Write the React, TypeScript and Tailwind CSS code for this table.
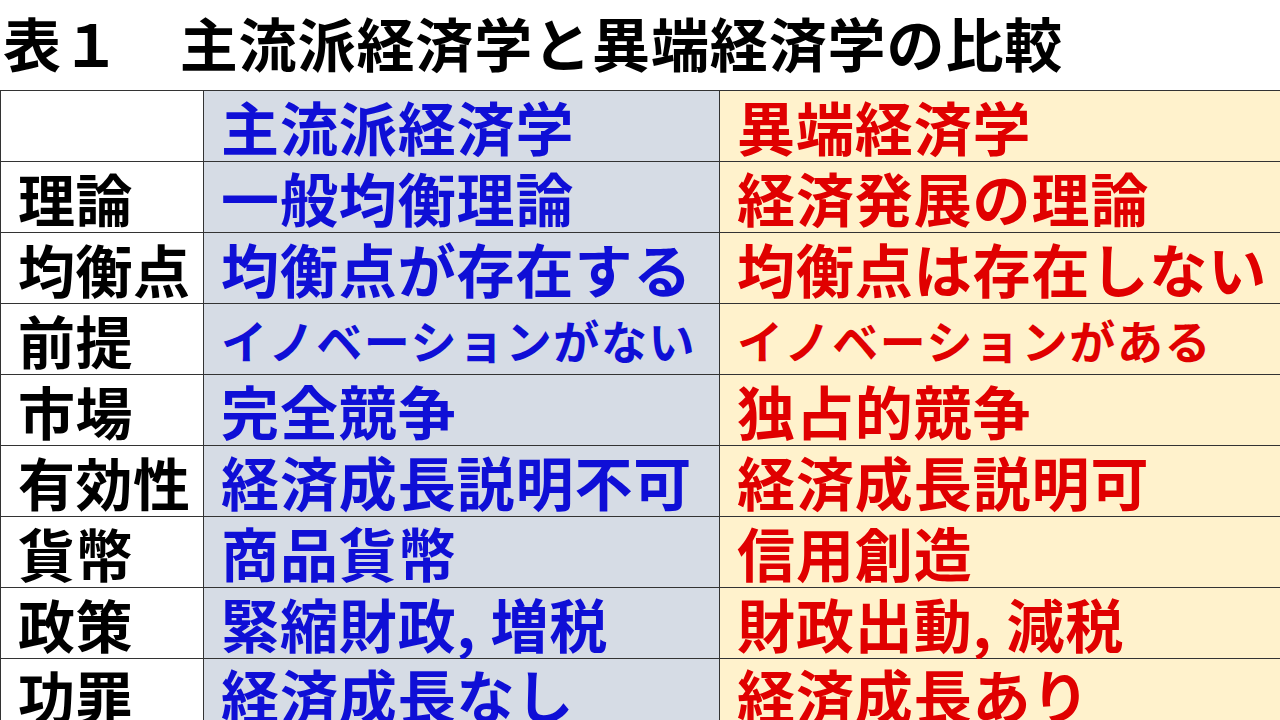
import React from "react";

const rows: { label: string; main: string; hetero: string; small?: boolean }[] = [
  { label: "", main: "主流派経済学", hetero: "異端経済学" },
  { label: "理論", main: "一般均衡理論", hetero: "経済発展の理論" },
  { label: "均衡点", main: "均衡点が存在する", hetero: "均衡点は存在しない" },
  { label: "前提", main: "イノベーションがない", hetero: "イノベーションがある", small: true },
  { label: "市場", main: "完全競争", hetero: "独占的競争" },
  { label: "有効性", main: "経済成長説明不可", hetero: "経済成長説明可" },
  { label: "貨幣", main: "商品貨幣", hetero: "信用創造" },
  { label: "政策", main: "緊縮財政, 増税", hetero: "財政出動, 減税" },
  { label: "功罪", main: "経済成長なし", hetero: "経済成長あり" },
];

export default function App() {
  return (
    <div
      className="w-[1280px] h-[720px] overflow-hidden bg-white"
      style={{ fontFamily: '"Noto Sans CJK JP", "Noto Sans", sans-serif' }}
    >
      <div className="h-[90px] flex items-center pl-[3px] pb-[6px]">
        <h1 className="text-[58px] leading-none font-bold text-black whitespace-pre tracking-[0.9px]">表１　主流派経済学と異端経済学の比較</h1>
      </div>
      <div className="grid grid-cols-[203px_516px_561px] border-t-[1.5px] border-l-[1.5px] border-[#333]">
        {rows.map((r, i) => (
          <React.Fragment key={i}>
            <div className="h-[71px] flex items-center pl-[17px] border-r-[1.5px] border-b-[1.5px] border-[#333] bg-white text-black font-bold text-[57px] leading-none whitespace-nowrap tracking-[0.5px]">
              {r.label}
            </div>
            <div
              className={
                "h-[71px] flex items-center pl-[17px] border-r-[1.5px] border-b-[1.5px] border-[#333] bg-[#d6dce5] text-[#0f0fd6] font-bold leading-none whitespace-nowrap " +
                (r.small ? "text-[46px] tracking-[1.6px]" : "text-[58px] tracking-[0.9px]")
              }
            >
              {r.main}
            </div>
            <div
              className={
                "h-[71px] flex items-center pl-[17px] border-r-[1.5px] border-b-[1.5px] border-[#333] bg-[#fff2cc] text-[#e00000] font-bold leading-none whitespace-nowrap " +
                (r.small ? "text-[46px] tracking-[1.6px]" : "text-[58px] tracking-[0.9px]")
              }
            >
              {r.hetero}
            </div>
          </React.Fragment>
        ))}
      </div>
    </div>
  );
}
